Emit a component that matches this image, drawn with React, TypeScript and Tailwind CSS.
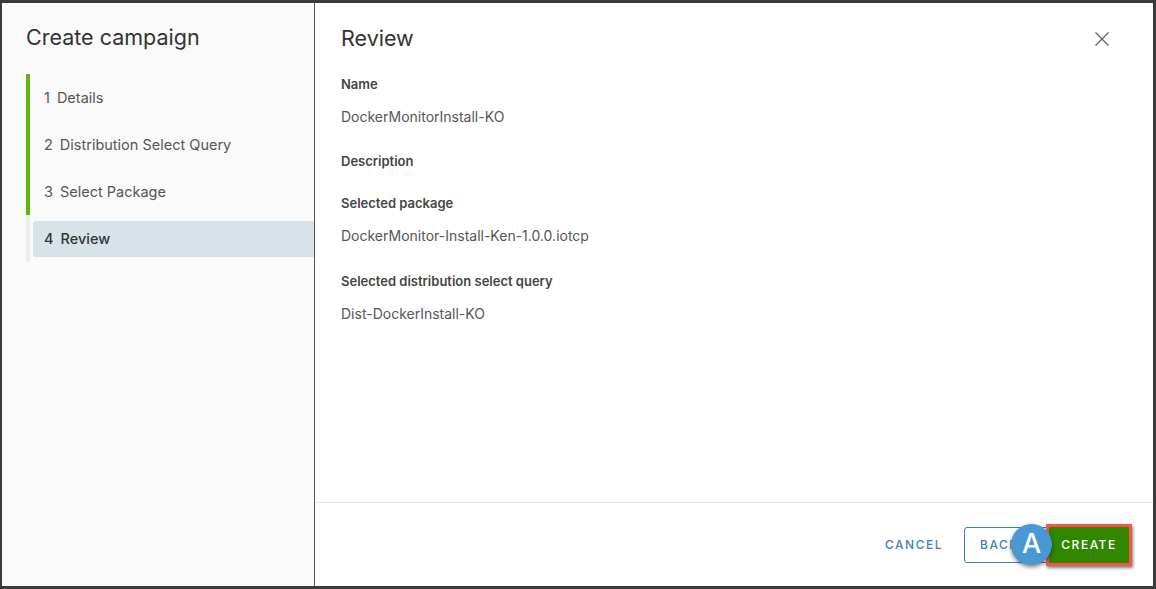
import React from "react";

const font = { fontFamily: 'Inter, "Noto Sans", sans-serif' };

function Step({ n, label, active }: { n: number; label: string; active?: boolean }) {
  return (
    <div className="flex h-[47px] items-center">
      <div
        className={
          active
            ? "ml-[3px] flex h-[36px] w-full items-center rounded-l-[3px] bg-[#d8e3e9] pt-[1px] pl-[11px] text-[14.5px] font-medium text-[#333333]"
            : "ml-[3px] flex h-[36px] w-full items-center pt-[1px] pl-[11px] text-[14.5px] text-[#565656]"
        }
      >
        <span className="mr-[7px]">{n}</span>
        <span>{label}</span>
      </div>
    </div>
  );
}

function Field({ label, value, gap }: { label: string; value?: string; gap: string }) {
  return (
    <div className={gap}>
      <div className="text-[13px] leading-[20px] font-semibold text-[#454545]">{label}</div>
      {value && <div className="mt-[13px] text-[14px] leading-[20px] text-[#565656]">{value}</div>}
    </div>
  );
}

export default function App() {
  return (
    <div className="h-[589px] w-[1156px] overflow-hidden bg-[#3b3b3b] pt-[3px] pr-[3px] pb-[3px] pl-[2px]" style={font}>
      <div className="flex h-[583px] w-full">
        <aside className="w-[313px] shrink-0 border-r border-[#555555] bg-[#fafafa] pt-[19px] pl-[24px]">
          <h2 className="text-[21.5px] leading-[30px] font-normal text-[#333333]">Create campaign</h2>
          <div className="relative mt-[22px] border-l-[4px] border-[#eeeeee]">
            <div className="absolute top-0 -left-[4px] h-[141px] w-[4px] bg-[#60b515]" />
            <Step n={1} label="Details" />
            <Step n={2} label="Distribution Select Query" />
            <Step n={3} label="Select Package" />
            <Step n={4} label="Review" active />
          </div>
        </aside>
        <main className="flex min-w-0 flex-1 flex-col bg-white">
          <div className="flex-1 pt-[20px] pr-[43px] pl-[26px]">
            <div className="flex items-center justify-between">
              <h3 className="text-[21.5px] leading-[30px] font-normal text-[#333333]">Review</h3>
              <svg width="16" height="16" viewBox="0 0 16 16" className="mt-[2px]" fill="none" stroke="#666666" strokeWidth="1.4">
                <path d="M1.5 1.5 14.5 14.5M14.5 1.5 1.5 14.5" />
              </svg>
            </div>
            <Field label="Name" value="DockerMonitorInstall-KO" gap="mt-[21px]" />
            <Field label="Description" gap="mt-[24px]" />
            <Field label="Selected package" value="DockerMonitor-Install-Ken-1.0.0.iotcp" gap="mt-[22px]" />
            <Field label="Selected distribution select query" value="Dist-DockerInstall-KO" gap="mt-[25px]" />
          </div>
          <div className="flex h-[84px] items-center justify-end border-t border-[#e8e8e8] pr-[21px]">
            <button className="mr-[21px] text-[12px] font-medium tracking-[1.5px] text-[#3f7fb8]">CANCEL</button>
            <button className="h-[36px] w-[94px] rounded-[3px] border border-[#3f7fb8] pl-[15px] text-left text-[12px] font-medium tracking-[1.5px] text-[#3f7fb8]">BACK</button>
            <div className="relative -ml-[12px]">
              <div className="flex h-[42px] w-[86px] items-center justify-center border-[3px] border-[#f4574a] bg-[#318700] text-[12px] font-medium tracking-[1.5px] text-white shadow-[1px_2px_3px_rgba(0,0,0,0.5)]">
                CREATE
              </div>
              <div className="absolute top-0 -left-[35px] flex h-[41px] w-[41px] items-center justify-center rounded-full bg-[#4a98d3] text-[27px] font-medium text-white shadow-[0_2px_4px_rgba(0,0,0,0.5)]">
                A
              </div>
            </div>
          </div>
        </main>
      </div>
    </div>
  );
}
